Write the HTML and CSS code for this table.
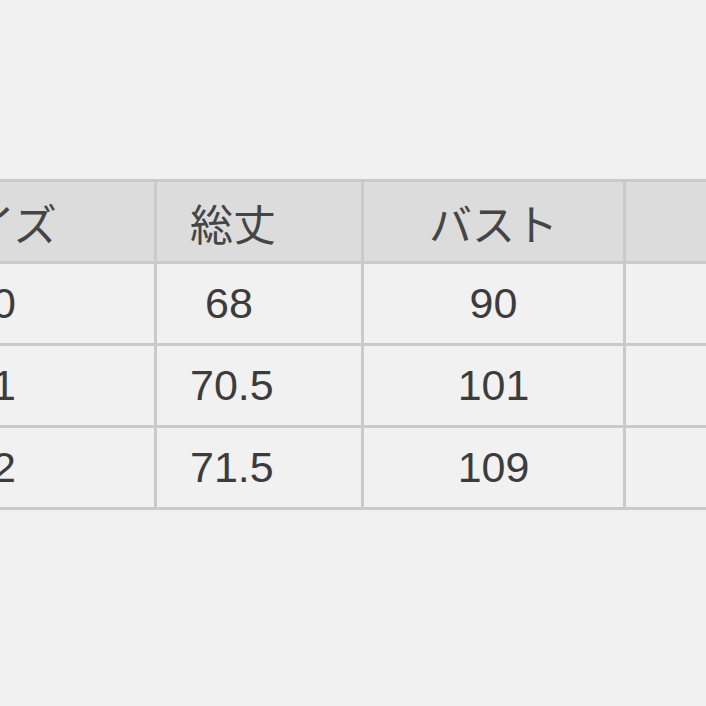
FILE: index.html
```html
<!DOCTYPE html>
<html lang="ja">
<head>
<meta charset="utf-8">
<link rel="stylesheet" href="styles.css">
</head>
<body>
<div class="page">
  <div class="table">
    <div class="cell head c1">サイズ</div>
    <div class="cell head c2">総丈</div>
    <div class="cell head c3">バスト</div>
    <div class="cell head c4"></div>

    <div class="cell c1">0</div>
    <div class="cell c2 indent">68</div>
    <div class="cell c3">90</div>
    <div class="cell c4"></div>

    <div class="cell c1">1</div>
    <div class="cell c2">70.5</div>
    <div class="cell c3">101</div>
    <div class="cell c4"></div>

    <div class="cell c1">2</div>
    <div class="cell c2">71.5</div>
    <div class="cell c3">109</div>
    <div class="cell c4"></div>
  </div>
</div>
</body>
</html>
```

FILE: styles.css
```css
html, body {
  margin: 0;
  padding: 0;
  background: #f0f0f0;
  overflow: hidden;
}

.page {
  width: 706px;
  height: 706px;
  padding-top: 179px;
  box-sizing: border-box;
  overflow: hidden;
}

.table {
  display: grid;
  grid-template-columns: 308px 204px 259px 300px;
  grid-auto-rows: 79px;
  gap: 3px;
  padding: 3px;
  background: #cacaca;
  margin-left: -157px;
  width: max-content;
  font-family: "Liberation Sans", "Noto Sans CJK JP", sans-serif;
  font-size: 43px;
  color: #3c3c3c;
}

.cell {
  background: #f1f1f1;
  display: flex;
  align-items: center;
  white-space: pre;
}

.head {
  background: #dcdcdc;
  color: #454545;
}

.c1 {
  justify-content: center;
  padding-left: 8px;
}

.head.c1 {
  padding-left: 0;
  padding-right: 14px;
}

.c2 {
  justify-content: flex-start;
  padding-left: 33px;
}

.c2.indent {
  padding-left: 48px;
}

.c3 {
  justify-content: center;
}
```
